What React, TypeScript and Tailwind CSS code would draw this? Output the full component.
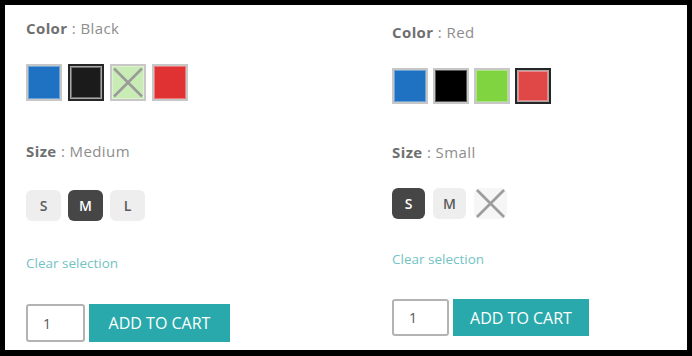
import { clsx } from "clsx";

type Swatch = { name: string; fill: string; selected?: boolean; disabled?: boolean };

const leftColors: Swatch[] = [
  { name: "Blue", fill: "bg-[#1f71c2]" },
  { name: "Black", fill: "bg-[#1b1b1b]", selected: true },
  { name: "Green", fill: "bg-[#c9ebb5]", disabled: true },
  { name: "Red", fill: "bg-[#e03232]" },
];

const rightColors: Swatch[] = [
  { name: "Blue", fill: "bg-[#1f71c2]" },
  { name: "Black", fill: "bg-[#000000]" },
  { name: "Green", fill: "bg-[#7fd43f]" },
  { name: "Red", fill: "bg-[#e04747]", selected: true },
];

type SizeOpt = { label: string; selected?: boolean; disabled?: boolean };

function Cross({ color = "#9a9a9a", width = 2.5 }: { color?: string; width?: number }) {
  return (
    <svg viewBox="0 0 32 32" className="absolute inset-0 h-full w-full">
      <line x1="2" y1="2" x2="30" y2="30" stroke={color} strokeWidth={width} />
      <line x1="30" y1="2" x2="2" y2="30" stroke={color} strokeWidth={width} />
    </svg>
  );
}

function ColorSwatch({ s, size }: { s: Swatch; size: string }) {
  return (
    <span
      title={s.name}
      className={clsx(
        "relative box-border block border-2",
        size,
        s.selected ? "border-[#262626] p-px bg-[#a8a8a8]" : "border-[#c7c7c7]",
      )}
    >
      <span
        className={clsx("relative block h-full w-full shadow-[inset_0_0_0_1px_rgba(255,255,255,0.35)]", s.fill)}
      >
        {s.disabled && <Cross />}
      </span>
    </span>
  );
}

function SizeButton({ o, size }: { o: SizeOpt; size: string }) {
  if (o.disabled) {
    return (
      <span className={clsx("relative block rounded-md bg-[#f6f6f6]", size)}>
        <Cross color="#9d9d9d" width={2.8} />
      </span>
    );
  }
  return (
    <span
      className={clsx(
        "flex items-center justify-center rounded-md text-[14px] font-semibold",
        size,
        o.selected ? "bg-[#464646] text-white" : "bg-[#eeeeee] text-[#5a5a5a]",
      )}
    >
      {o.label}
    </span>
  );
}

function Label({ name, value }: { name: string; value: string }) {
  return (
    <p className="text-[15px] leading-[20px] tracking-[0.4px] text-[#8d8d8d]">
      <span className="font-bold text-[#6f6f6f]">{name}</span> : {value}
    </p>
  );
}

function Product({
  color,
  swatches,
  size,
  sizes,
  compact,
}: {
  color: string;
  swatches: Swatch[];
  size: string;
  sizes: SizeOpt[];
  compact?: boolean;
}) {
  return (
    <div className="flex flex-col">
      <Label name="Color" value={color} />
      <div className={clsx("flex", compact ? "mt-[26px] gap-[5px]" : "mt-[26px] gap-[6px]")}>
        {swatches.map((s) => (
          <ColorSwatch key={s.name} s={s} size={compact ? "h-[36px] w-[36px]" : "h-[37px] w-[36px]"} />
        ))}
      </div>
      <div className={compact ? "mt-[38px]" : "mt-[40px]"}>
        <Label name="Size" value={size} />
      </div>
      <div className={clsx("flex", compact ? "mt-[26px] gap-[8px]" : "mt-[29px] gap-[7px]")}>
        {sizes.map((o) => (
          <SizeButton key={o.label} o={o} size={compact ? "h-[31px] w-[33px]" : "h-[31px] w-[35px]"} />
        ))}
      </div>
      <a className={clsx("text-[13.5px] leading-[18px] text-[#73c3c4]", compact ? "mt-[31px]" : "mt-[33px]")}>
        Clear selection
      </a>
      <div className={clsx("flex gap-[4px]", compact ? "mt-[31px]" : "mt-[32px]")}>
        <div
          className={clsx(
            "flex items-center rounded-[3px] border-2 border-[#b3b3b3] pl-[15px] text-[14px] text-[#555]",
            compact ? "h-[37px] w-[57px]" : "h-[38px] w-[59px]",
          )}
        >
          1
        </div>
        <button
          className={clsx(
            "flex items-center justify-center bg-[#29a9ab] text-[16px] text-white",
            compact ? "h-[37px] w-[136px]" : "h-[38px] w-[141px]",
          )}
        >
          ADD TO CART
        </button>
      </div>
    </div>
  );
}

export default function App() {
  return (
    <div
      className="h-[356px] w-[692px] bg-black pb-[6px] pl-[5px] pr-[5px] pt-[5px]"
      style={{ fontFamily: "'Open Sans', Lato, sans-serif" }}
    >
      <div className="flex h-full bg-white">
        <div className="w-[387px] pl-[21px] pt-[13px]">
          <Product
            color="Black"
            swatches={leftColors}
            size="Medium"
            sizes={[{ label: "S" }, { label: "M", selected: true }, { label: "L" }]}
          />
        </div>
        <div className="pt-[17px]">
          <Product
            compact
            color="Red"
            swatches={rightColors}
            size="Small"
            sizes={[{ label: "S", selected: true }, { label: "M" }, { label: "X", disabled: true }]}
          />
        </div>
      </div>
    </div>
  );
}
